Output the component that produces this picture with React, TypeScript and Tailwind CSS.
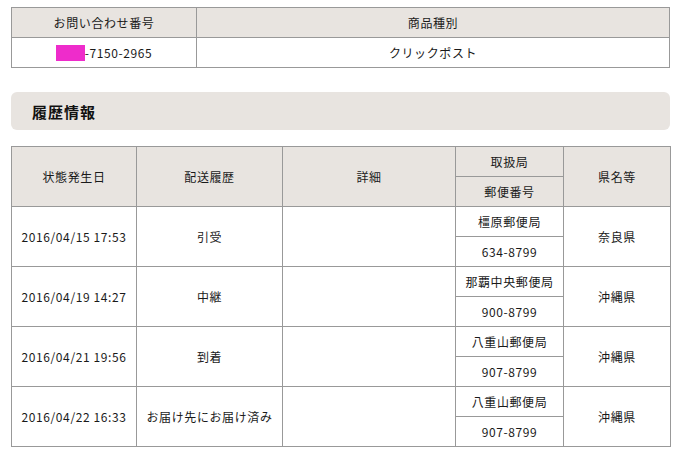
const rows = [
  { date: '2016/04/15 17:53', status: '引受', office: '橿原郵便局', zip: '634-8799', pref: '奈良県' },
  { date: '2016/04/19 14:27', status: '中継', office: '那覇中央郵便局', zip: '900-8799', pref: '沖縄県' },
  { date: '2016/04/21 19:56', status: '到着', office: '八重山郵便局', zip: '907-8799', pref: '沖縄県' },
  { date: '2016/04/22 16:33', status: 'お届け先にお届け済み', office: '八重山郵便局', zip: '907-8799', pref: '沖縄県' },
];

const th = 'border border-[#999999] bg-[#e8e4e0] font-normal text-center align-middle p-0';
const td = 'border border-[#999999] bg-white text-center align-middle p-0';

const App = () => {
  return (
    <div
      className="w-[677px] h-[452px] bg-white text-[12px] leading-none tracking-[0.6px] text-[#1a1a1a] pl-[11px] pr-[7px] pt-[7px]"
      style={{ fontFamily: '"Noto Sans CJK JP", "Noto Sans", sans-serif' }}
    >
      <table className="w-[659px] border-collapse table-fixed">
        <colgroup>
          <col className="w-[185px]" />
          <col />
        </colgroup>
        <tbody>
          <tr className="h-[30px]">
            <th className={th}>お問い合わせ番号</th>
            <th className={th}>商品種別</th>
          </tr>
          <tr className="h-[30px]">
            <td className={td}>
              <div className="flex items-center justify-center">
                <span className="inline-block w-[29px] h-[16px] bg-[#ee2ccb]" />
                <span>-7150-2965</span>
              </div>
            </td>
            <td className={td}>クリックポスト</td>
          </tr>
        </tbody>
      </table>

      <div className="mt-[24px] h-[38px] rounded-[6px] bg-[#e8e4e0] flex items-center px-[21px]">
        <h2 className="text-[15px] font-bold tracking-[1px] text-[#111111]">履歴情報</h2>
      </div>

      <table className="mt-[16px] w-[659px] border-collapse table-fixed">
        <colgroup>
          <col className="w-[125px]" />
          <col className="w-[146px]" />
          <col className="w-[173px]" />
          <col className="w-[108px]" />
          <col className="w-[107px]" />
        </colgroup>
        <tbody>
          <tr className="h-[30px]">
            <th className={th} rowSpan={2}>状態発生日</th>
            <th className={th} rowSpan={2}>配送履歴</th>
            <th className={th} rowSpan={2}>詳細</th>
            <th className={th}>取扱局</th>
            <th className={th} rowSpan={2}>県名等</th>
          </tr>
          <tr className="h-[30px]">
            <th className={th}>郵便番号</th>
          </tr>
          {rows.map((r) => (
            <>
              <tr key={r.date + 'a'} className="h-[30px]">
                <td className={td} rowSpan={2}>{r.date}</td>
                <td className={td} rowSpan={2}>{r.status}</td>
                <td className={td} rowSpan={2}></td>
                <td className={td}>{r.office}</td>
                <td className={td} rowSpan={2}>{r.pref}</td>
              </tr>
              <tr key={r.date + 'b'} className="h-[30px]">
                <td className={td}>{r.zip}</td>
              </tr>
            </>
          ))}
        </tbody>
      </table>
    </div>
  );
};

export default App;
